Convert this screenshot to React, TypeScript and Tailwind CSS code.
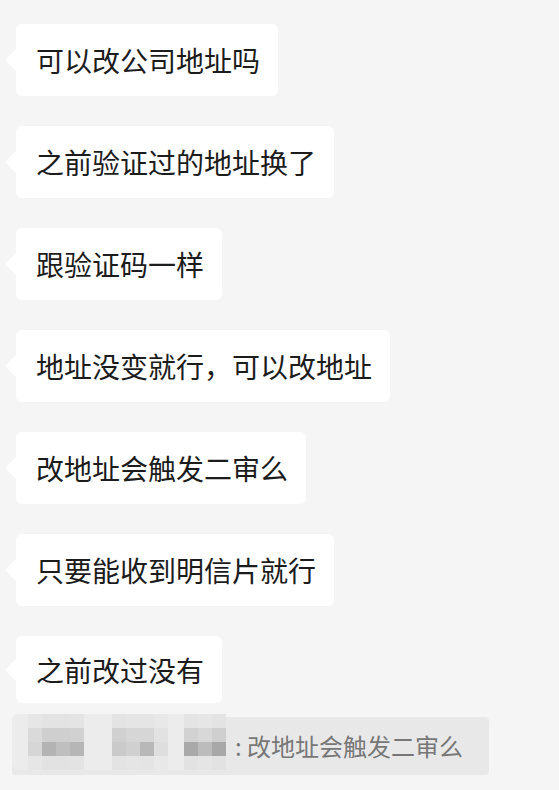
import React from 'react';

const messages = [
  '可以改公司地址吗',
  '之前验证过的地址换了',
  '跟验证码一样',
  '地址没变就行，可以改地址',
  '改地址会触发二审么',
  '只要能收到明信片就行',
  '之前改过没有',
];

// mosaic blocks hiding the quoted sender's name (14px cells)
const mosaic: { x: number; cells: string[][] }[] = [
  {
    x: 28,
    cells: [
      ['#e6e6e6', '#e3e3e3', '#e3e3e3', '#e4e4e4'],
      ['#dadada', '#cfcfcf', '#cfcfcf', '#d1d1d1'],
      ['#d6d6d6', '#b3b3b3', '#bfbfbf', '#b6b6b6'],
      ['#e6e6e6', '#e2e2e2', '#e2e2e2', '#e3e3e3'],
    ],
  },
  {
    x: 112,
    cells: [
      ['#e3e3e3', '#e5e5e5', '#e5e5e5', '#e8e8e8'],
      ['#d0d0d0', '#d6d6d6', '#d6d6d6', '#e2e2e2'],
      ['#cacaca', '#d0d0d0', '#b8b8b8', '#dedede'],
      ['#e3e3e3', '#e5e5e5', '#e4e4e4', '#e8e8e8'],
    ],
  },
  {
    x: 182,
    cells: [
      ['#e4e4e4', '#e6e6e6', '#e3e3e3'],
      ['#d2d2d2', '#d8d8d8', '#cfcfcf'],
      ['#a9a9a9', '#bcbcbc', '#a8a8a8'],
      ['#e2e2e2', '#e5e5e5', '#e2e2e2'],
    ],
  },
];

const Bubble: React.FC<{ text: string; last?: boolean }> = ({ text, last }) => (
  <div
    className={`relative flex items-center rounded-md bg-white pl-5 pr-[18px] text-[28px] leading-8 text-[#1c1c1c] ${
      last ? 'h-[67px]' : 'h-[72px]'
    }`}
  >
    <span className="absolute left-[-11px] top-1/2 -translate-y-1/2 border-y-[11px] border-r-[11px] border-y-transparent border-r-white" />
    {text}
  </div>
);

const App: React.FC = () => {
  return (
    <div
      className="min-h-[790px] w-full bg-[#f5f5f5] pl-4 pt-6"
      style={{ fontFamily: '"Noto Sans CJK SC", "Noto Sans", sans-serif' }}
    >
      <div className="flex flex-col items-start gap-[30px]">
        {messages.map((m, i) => (
          <Bubble key={i} text={m} last={i === messages.length - 1} />
        ))}
      </div>

      {/* quoted reply */}
      <div className="-ml-1 mt-[14px] flex h-[58px] w-[477px] items-center rounded-sm bg-[#e8e8e8]">
        <div className="flex h-[56px] w-[213px] shrink-0 -translate-y-1 items-center rounded-md bg-[#ececec]">
          {mosaic.map((g, gi) => (
            <div key={gi} className={`flex flex-col ${gi === 1 ? 'ml-[28px]' : 'ml-[16px]'}`}>
              {g.cells.map((row, ri) => (
                <div key={ri} className="flex">
                  {row.map((c, ci) => (
                    <div key={ci} className="h-[14px] w-[14px]" style={{ backgroundColor: c }} />
                  ))}
                </div>
              ))}
            </div>
          ))}
        </div>
        <span className="ml-[10px] whitespace-nowrap text-[24px] leading-8 text-[#777777]">: 改地址会触发二审么</span>
      </div>
    </div>
  );
};

export default App;
